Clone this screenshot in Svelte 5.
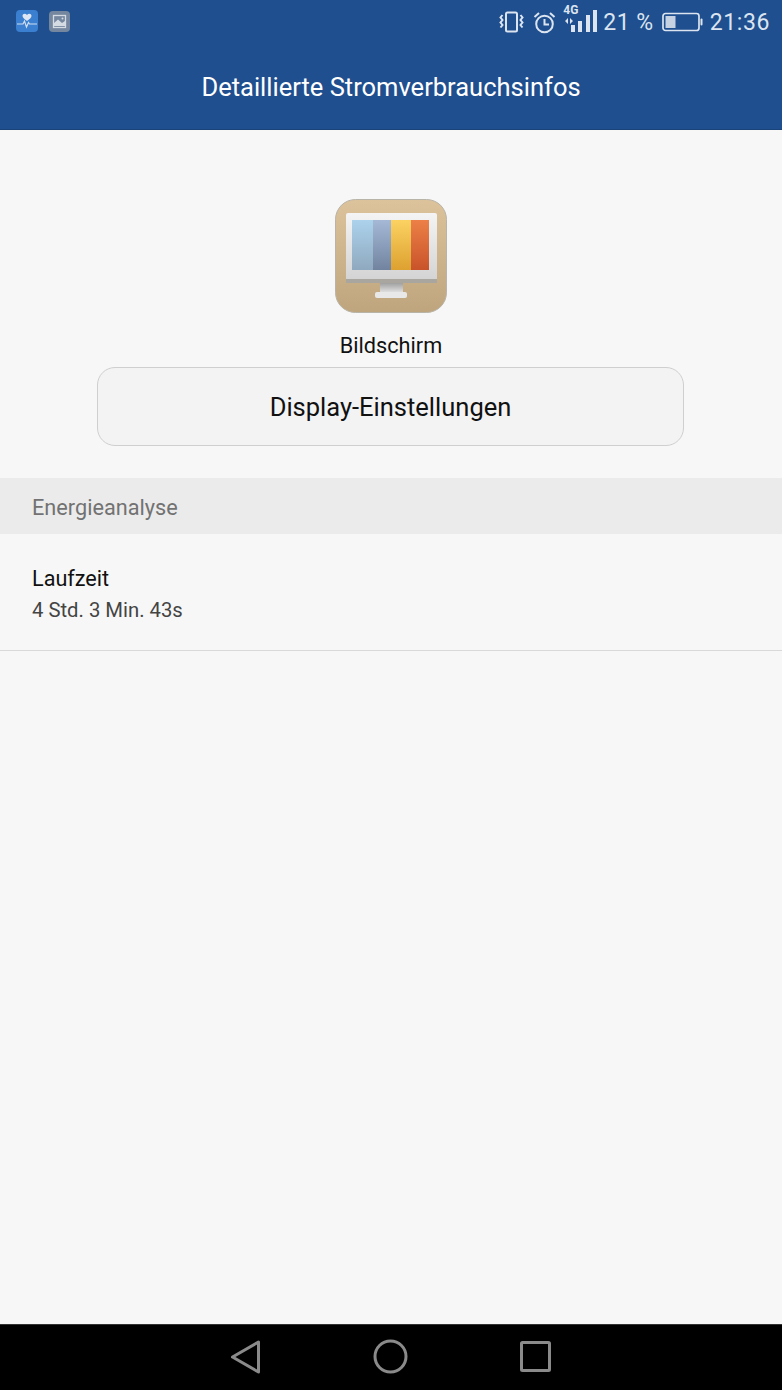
<script>
  let appTitle = 'Detaillierte Stromverbrauchsinfos'
</script>

<div class="phone">
  <header class="top">
    <div class="status">
      <div class="notifs">
        <svg class="notif" width="22" height="22" viewBox="0 0 22 22">
          <rect width="22" height="22" rx="4" fill="#3a7fd0" />
          <path d="M11 11 C8 9 6.500 7.500 6.500 5.800 C6.500 3.800 9.500 3 11 5 C12.500 3 15.500 3.800 15.500 5.800 C15.500 7.500 14 9 11 11 Z" fill="#dde6f2" />
          <path d="M1 14 H7 L8.500 11 L10.500 17 L12.500 12.500 L13.500 14 H21" fill="none" stroke="#cfdef0" stroke-width="1.200" />
        </svg>
        <svg class="notif" width="21" height="21" viewBox="0 0 21 21">
          <rect width="21" height="21" rx="4" fill="#74879f" />
          <rect x="4.500" y="4.500" width="12" height="12" fill="none" stroke="#d5dbe3" stroke-width="1.300" />
          <path d="M5 15 V12 L9 8.500 L13 12 L16 10 V15 Z" fill="#d5dbe3" />
          <circle cx="13.500" cy="7.500" r="1" fill="#d5dbe3" />
        </svg>
      </div>
      <div class="sys">
        <svg width="25" height="22" viewBox="0 0 25 22" fill="none" stroke="#dbe4ef" stroke-width="2">
          <rect x="7" y="1.500" width="11" height="19" rx="1.500" />
          <path d="M3.500 4 L1.500 6.500 L3.500 9 L1.500 11.500 L3.500 14 L1.500 16.500" />
          <path d="M21.500 4 L23.500 6.500 L21.500 9 L23.500 11.500 L21.500 14 L23.500 16.500" />
        </svg>
        <svg class="alarm" width="23" height="23" viewBox="0 0 23 23" fill="none" stroke="#dbe4ef" stroke-width="2">
          <circle cx="11.500" cy="13" r="8.300" />
          <path d="M11.500 8 V13.500 H16" />
          <path d="M1.500 6 L6 2 M21.500 6 L17 2" />
        </svg>
        <div class="net">
          <span class="fourg">4G</span>
          <svg width="36" height="23" viewBox="0 0 36 23" fill="#dbe4ef">
            <path d="M5 8 V14 L2 11 Z M7 8 L10 11 L7 14 Z" />
            <rect x="8" y="15" width="4" height="7" />
            <rect x="15" y="11" width="4" height="11" />
            <rect x="23" y="5" width="4" height="17" />
            <rect x="30" y="0" width="4" height="22" />
          </svg>
        </div>
        <span class="pct">21 %</span>
        <svg class="batt" width="41" height="20" viewBox="0 0 41 20">
          <rect x="1" y="1.500" width="36" height="17" rx="2.500" fill="none" stroke="#dbe4ef" stroke-width="1.700" />
          <rect x="3.500" y="4" width="10" height="12" fill="#c6d2e1" />
          <rect x="38.500" y="6.500" width="2" height="7" rx="1" fill="#dbe4ef" />
        </svg>
        <span class="clock">21:36</span>
      </div>
    </div>
    <h1>{appTitle}</h1>
  </header>

  <main>
    <section class="hero">
      <svg class="appicon" width="112" height="114" viewBox="0 0 112 114">
        <defs>
          <linearGradient id="tan" x1="0" y1="0" x2="0" y2="1">
            <stop offset="0" stop-color="#dcc39c" />
            <stop offset="1" stop-color="#bfa57d" />
          </linearGradient>
          <linearGradient id="bezel" x1="0" y1="0" x2="0" y2="1"><stop offset="0" stop-color="#f4f4f4" /><stop offset="1" stop-color="#d2d2d2" /></linearGradient>
          <linearGradient id="c1" x1="0" y1="0" x2="0" y2="1"><stop offset="0" stop-color="#acd2ec" /><stop offset="1" stop-color="#8fa9bf" /></linearGradient>
          <linearGradient id="c2" x1="0" y1="0" x2="0" y2="1"><stop offset="0" stop-color="#a5b9d6" /><stop offset="1" stop-color="#71839f" /></linearGradient>
          <linearGradient id="c3" x1="0" y1="0" x2="0" y2="1"><stop offset="0" stop-color="#fbd262" /><stop offset="1" stop-color="#dda130" /></linearGradient>
          <linearGradient id="c4" x1="0" y1="0" x2="0" y2="1"><stop offset="0" stop-color="#ec8047" /><stop offset="1" stop-color="#c9532a" /></linearGradient>
          <linearGradient id="stand" x1="0" y1="0" x2="0" y2="1"><stop offset="0" stop-color="#a0a0a0" /><stop offset="1" stop-color="#dedede" /></linearGradient>
        </defs>
        <rect x="0.500" y="0.500" width="111" height="113" rx="20" fill="url(#tan)" stroke="#b9b4a8" />
        <path d="M45 84 H68 V93 H45 Z" fill="url(#stand)" />
        <rect x="40" y="93" width="32" height="6" rx="2" fill="#e8e8e8" />
        <rect x="11" y="14" width="91" height="70" rx="2" fill="url(#bezel)" />
        <rect x="11" y="80" width="91" height="4" fill="#a9a6a0" />
        <rect x="17" y="21" width="21" height="50" fill="url(#c1)" />
        <rect x="38" y="21" width="18" height="50" fill="url(#c2)" />
        <rect x="56" y="21" width="20" height="50" fill="url(#c3)" />
        <rect x="76" y="21" width="18" height="50" fill="url(#c4)" />
      </svg>
      <div class="label">Bildschirm</div>
      <button class="action">Display-Einstellungen</button>
    </section>

    <div class="subhead">Energieanalyse</div>

    <div class="row">
      <div class="row-title">Laufzeit</div>
      <div class="row-sub">4 Std. 3 Min. 43s</div>
    </div>
  </main>

  <nav class="softkeys">
    <svg width="32" height="34" viewBox="0 0 32 34" fill="none" stroke="#8a8a8a" stroke-width="3" stroke-linejoin="round">
      <path d="M29.500 2 V32 L3.500 17 Z" />
    </svg>
    <svg width="35" height="35" viewBox="0 0 35 35" fill="none" stroke="#8a8a8a" stroke-width="3">
      <circle cx="17.500" cy="17.500" r="15.500" />
    </svg>
    <svg width="31" height="31" viewBox="0 0 31 31" fill="none" stroke="#8a8a8a" stroke-width="3" stroke-linejoin="round">
      <rect x="1.500" y="1.500" width="28" height="28" rx="1" />
    </svg>
  </nav>
</div>

<style>
  :global(body) { margin: 0; background: #f7f7f7; }
  .phone { width: 782px; height: 1390px; display: flex; flex-direction: column; font-family: Roboto, "Noto Sans", sans-serif; background: #f7f7f7; overflow: hidden; }

  .top { height: 130px; box-sizing: border-box; background: #1f4f8f; border-bottom: 1px solid #1a4479; color: #fff; }
  .status { height: 44px; display: flex; justify-content: space-between; align-items: flex-start; padding: 0 12px 0 16px; }
  .notifs { display: flex; gap: 11px; padding-top: 10px; align-items: center; }
  .sys { display: flex; align-items: center; height: 44px; color: #dbe4ef; }
  .alarm { margin-left: 9px; }
  .net { position: relative; width: 36px; height: 32px; margin-left: 7px; align-self: flex-start; margin-top: 3px; }
  .net svg { position: absolute; left: 0; top: 7px; }
  .fourg { position: absolute; left: 0; top: 0; font-size: 12px; font-weight: 700; line-height: 14px; }
  .pct { font-size: 23px; margin-left: 4px; letter-spacing: .5px; }
  .batt { margin-left: 8px; }
  .clock { font-size: 23px; margin-left: 7px; letter-spacing: .6px; }
  h1 { margin: 0; font-size: 25.500px; font-weight: 400; line-height: 87px; text-align: center; color: #fff; }

  main { flex: 1; }
  .hero { display: flex; flex-direction: column; align-items: center; padding-top: 69px; }
  .appicon { display: block; }
  .label { font-size: 21.700px; line-height: 28px; color: #111; margin-top: 19px; }
  .action { width: 587px; height: 79px; margin-top: 7px; margin-right: 1px; box-sizing: border-box; border: 1px solid #cfcfcf; border-radius: 18px; background: #f3f3f3; font: 400 25.500px Roboto, sans-serif; color: #111; }

  .subhead { margin-top: 32px; height: 56px; box-sizing: border-box; background: #ebebeb; padding-left: 32px; font-size: 21.700px; line-height: 59px; color: #727272; }
  .row { height: 117px; box-sizing: border-box; border-bottom: 1px solid #d9d9d9; padding: 30px 32px 0; }
  .row-title { font-size: 21.600px; line-height: 30px; color: #111; }
  .row-sub { font-size: 20.300px; line-height: 32px; color: #444; }

  .softkeys { height: 66px; background: #000; border-top: 1px solid #333; box-sizing: border-box; display: flex; justify-content: center; align-items: center; gap: 112px; padding: 0 2px 2px 0; }
</style>
